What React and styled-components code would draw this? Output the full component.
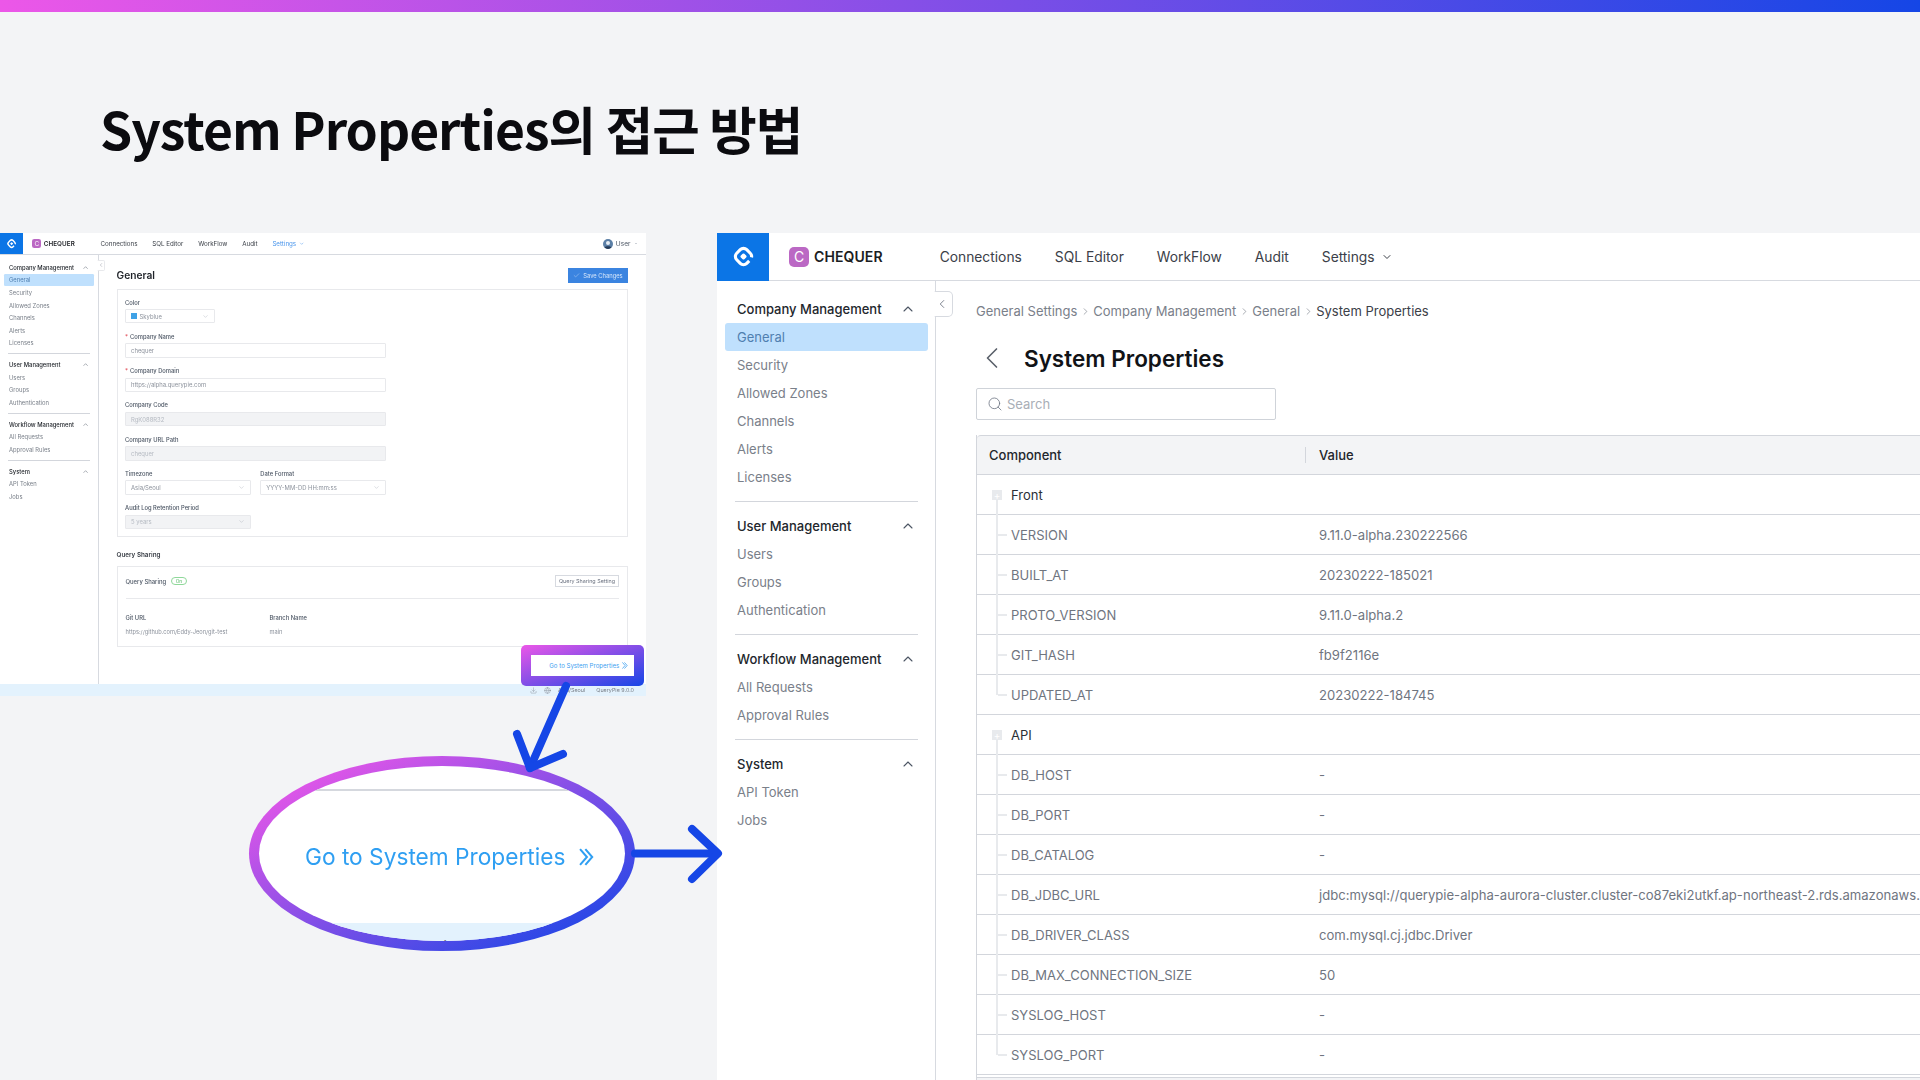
import React from "react"
import styled, { createGlobalStyle } from "styled-components"
import {
  Check,
  ChevronDown,
  ChevronLeft,
  ChevronRight,
  ChevronUp,
  Download,
  Globe,
  Search,
} from "lucide-react"

const UI_FONT = `Inter, "Noto Sans", sans-serif`

// the left window is the same app as the right one, at 45%
const SMALL = 0.45
const px = n => ({ $k = 1 }) => `${n * $k}px`

const menu = [
  {
    title: "Company Management",
    items: ["General", "Security", "Allowed Zones", "Channels", "Alerts", "Licenses"],
  },
  { title: "User Management", items: ["Users", "Groups", "Authentication"] },
  { title: "Workflow Management", items: ["All Requests", "Approval Rules"] },
  { title: "System", items: ["API Token", "Jobs"] },
]

const navItems = ["Connections", "SQL Editor", "WorkFlow", "Audit"]

const properties = [
  {
    name: "Front",
    rows: [
      ["VERSION", "9.11.0-alpha.230222566"],
      ["BUILT_AT", "20230222-185021"],
      ["PROTO_VERSION", "9.11.0-alpha.2"],
      ["GIT_HASH", "fb9f2116e"],
      ["UPDATED_AT", "20230222-184745"],
    ],
  },
  {
    name: "API",
    rows: [
      ["DB_HOST", "-"],
      ["DB_PORT", "-"],
      ["DB_CATALOG", "-"],
      ["DB_JDBC_URL", "jdbc:mysql://querypie-alpha-aurora-cluster.cluster-co87eki2utkf.ap-northeast-2.rds.amazonaws.com:3306"],
      ["DB_DRIVER_CLASS", "com.mysql.cj.jdbc.Driver"],
      ["DB_MAX_CONNECTION_SIZE", "50"],
      ["SYSLOG_HOST", "-"],
      ["SYSLOG_PORT", "-"],
    ],
  },
]

function LogoMark({ size }) {
  return (
    <svg width={size} height={size} viewBox="0 0 24 24" fill="none">
      <rect
        x="5.2"
        y="5.2"
        width="13.6"
        height="13.6"
        rx="4.4"
        transform="rotate(45 12 12)"
        stroke="#fff"
        strokeWidth="3"
        strokeDasharray="9 4 33.8 0"
      />
      <rect x="9.6" y="9.6" width="4.8" height="4.8" rx="1.2" transform="rotate(45 12 12)" fill="#fff" />
    </svg>
  )
}

function DoubleChevron({ height }) {
  return (
    <svg width={(height * 14) / 17} height={height} viewBox="0 0 14 17" fill="none" stroke="currentColor" strokeWidth="1.9">
      <path d="M1 1L7.5 8.5L1 16" />
      <path d="M6 1L12.5 8.5L6 16" />
    </svg>
  )
}

function TopNav({ k = 1, activeSettings, user }) {
  return (
    <Header $k={k}>
      <LogoCell $k={k}>
        <LogoMark size={25 * k} />
      </LogoCell>
      <Badge $k={k}>C</Badge>
      <Brand $k={k}>CHEQUER</Brand>
      <Nav $k={k}>
        {navItems.map(item => (
          <NavItem key={item} $k={k}>
            {item}
          </NavItem>
        ))}
        <NavItem $k={k} $active={activeSettings}>
          Settings
          <ChevronDown size={12 * k} strokeWidth={2} />
        </NavItem>
      </Nav>
      {user && (
        <UserBox>
          <svg width="10" height="10" viewBox="0 0 10 10">
            <circle cx="5" cy="5" r="5" fill="#5b7fa6" />
            <circle cx="5" cy="4" r="2" fill="#e6edf4" />
            <path d="M1.6 8.6C2.2 6.8 7.8 6.8 8.4 8.6 7 10.4 3 10.4 1.6 8.6Z" fill="#243a57" />
          </svg>
          User
          <Caret />
        </UserBox>
      )}
    </Header>
  )
}

function SideMenu({ k = 1 }) {
  return (
    <Sidebar $k={k}>
      {menu.map((group, i) => (
        <React.Fragment key={group.title}>
          {i > 0 && <SideRule $k={k} />}
          <SideTitle $k={k}>
            {group.title}
            <ChevronUp size={16 * k} strokeWidth={1.6} />
          </SideTitle>
          {group.items.map(item => (
            <SideItem key={item} $k={k} $active={item === "General"}>
              {item}
            </SideItem>
          ))}
        </React.Fragment>
      ))}
    </Sidebar>
  )
}

function Field({ label, value, required, select, disabled, width = 261 }) {
  return (
    <FieldBox $width={width}>
      <FieldLabel>
        {required && <Req>*</Req>}
        {label}
      </FieldLabel>
      <FieldInput $disabled={disabled}>
        {value}
        {select && <ChevronDown size={7} strokeWidth={1.2} />}
      </FieldInput>
    </FieldBox>
  )
}

function GeneralWindow() {
  return (
    <SmallWindow>
      <Shrunk>
        <TopNav k={SMALL} activeSettings user />
        <WindowBody>
          <SideMenu k={SMALL} />
          <SmallCollapse>
            <ChevronLeft size={6} strokeWidth={1.4} />
          </SmallCollapse>
          <SmallMain>
            <SmallHead>
              <SmallTitle>General</SmallTitle>
              <SaveButton>
                <Check size={7} strokeWidth={1.4} />
                Save Changes
              </SaveButton>
            </SmallHead>
            <FormCard>
              <FieldBox $width={90}>
                <FieldLabel>Color</FieldLabel>
                <FieldInput>
                  <ColorValue>
                    <Swatch />
                    Skyblue
                  </ColorValue>
                  <ChevronDown size={7} strokeWidth={1.2} />
                </FieldInput>
              </FieldBox>
              <Field required label="Company Name" value="chequer" />
              <Field required label="Company Domain" value="https://alpha.querypie.com" />
              <Field disabled label="Company Code" value="RgK088R32" />
              <Field disabled label="Company URL Path" value="chequer" />
              <FieldPair>
                <Field select width={125.7} label="Timezone" value="Asia/Seoul" />
                <Field select width={125.7} label="Date Format" value="YYYY-MM-DD HH:mm:ss" />
              </FieldPair>
              <Field select disabled width={125.7} label="Audit Log Retention Period" value="5 years" />
            </FormCard>
            <SectionTitle>Query Sharing</SectionTitle>
            <ShareCard>
              <ShareTop>
                <ShareLabel>
                  Query Sharing
                  <OnPill>On</OnPill>
                </ShareLabel>
                <ShareButton>Query Sharing Setting</ShareButton>
              </ShareTop>
              <ShareInfo>
                <div>
                  <InfoName>Git URL</InfoName>
                  <InfoValue>https://github.com/Eddy-Jeon/git-test</InfoValue>
                </div>
                <div>
                  <InfoName>Branch Name</InfoName>
                  <InfoValue>main</InfoValue>
                </div>
              </ShareInfo>
            </ShareCard>
          </SmallMain>
        </WindowBody>
        <StatusBar>
          <Download size={7} strokeWidth={1.3} />
          <Globe size={7} strokeWidth={1.3} />
          <span>Asia/Seoul</span>
          <StatusVersion>QueryPie 9.0.0</StatusVersion>
        </StatusBar>
      </Shrunk>
      <Highlight>
        <HighlightInner>
          Go to System Properties
          <DoubleChevron height={7} />
        </HighlightInner>
      </Highlight>
    </SmallWindow>
  )
}

function TreeRow({ row, last }) {
  return (
    <Row>
      <NameCell>
        <Guide $last={last} />
        <LeafName>{row[0]}</LeafName>
      </NameCell>
      <ValueCell>{row[1]}</ValueCell>
    </Row>
  )
}

function PropertiesWindow() {
  return (
    <BigWindow>
      <TopNav />
      <WindowBody>
        <SideMenu />
        <Collapse>
          <ChevronLeft size={14} strokeWidth={1.5} />
        </Collapse>
        <Main>
          <Crumbs>
            <span>General Settings</span>
            <ChevronRight size={11} strokeWidth={1.4} />
            <span>Company Management</span>
            <ChevronRight size={11} strokeWidth={1.4} />
            <span>General</span>
            <ChevronRight size={11} strokeWidth={1.4} />
            <CrumbNow>System Properties</CrumbNow>
          </Crumbs>
          <TitleRow>
            <ChevronLeft size={36} strokeWidth={1.1} color="#5b616b" />
            <PageTitle>System Properties</PageTitle>
          </TitleRow>
          <SearchBox>
            <Search size={16} strokeWidth={1.2} color="#6b7280" />
            Search
          </SearchBox>
          <Table>
            <HeadRow>
              <HeadName>Component</HeadName>
              <HeadSep />
              <HeadValue>Value</HeadValue>
            </HeadRow>
            {properties.map(group => (
              <React.Fragment key={group.name}>
                <Row>
                  <NameCell>
                    <GroupGuide>
                      <PlusBox>+</PlusBox>
                    </GroupGuide>
                    <GroupName>{group.name}</GroupName>
                  </NameCell>
                </Row>
                {group.rows.map((row, i) => (
                  <TreeRow key={row[0]} row={row} last={i === group.rows.length - 1} />
                ))}
              </React.Fragment>
            ))}
            <TableFoot />
          </Table>
        </Main>
      </WindowBody>
    </BigWindow>
  )
}

export default function App() {
  return (
    <Slide>
      <GlobalStyle />
      <TopBar />
      <SlideTitle>System Properties의 접근 방법</SlideTitle>
      <GeneralWindow />
      <PropertiesWindow />
      <Lens>
        <LensInner>
          <LensRule />
          <LensLink>
            <span>Go to System Properties</span>
            <DoubleChevron height={18} />
          </LensLink>
          <LensStatus>
            <span>/Seoul</span>
            <span>Q</span>
          </LensStatus>
        </LensInner>
      </Lens>
      <Arrows viewBox="0 0 1920 1080">
        <g fill="none" stroke="#1546e6" strokeWidth="8" strokeLinecap="round" strokeLinejoin="round">
          <path d="M566 686L530 768" />
          <path d="M517 734L530 768L563 754" />
          <path d="M635 853.5H717" />
          <path d="M692 829L718 853.5L692 879" />
        </g>
      </Arrows>
    </Slide>
  )
}

const GlobalStyle = createGlobalStyle`
  body {
    margin: 0;
    background: #f3f4f6;
    font-family: ${UI_FONT};
  }
`

const Slide = styled.div`
  position: relative;
  width: 1920px;
  height: 1080px;
  overflow: hidden;
  background: #f3f4f6;
`

const TopBar = styled.div`
  height: 12px;
  background: linear-gradient(90deg, #ec57e8 0%, #1546e6 100%);
`

const SlideTitle = styled.h1`
  margin: 82px 0 0 100px;
  font-family: "Noto Sans CJK KR", "Noto Sans", sans-serif;
  font-size: 51.6px;
  line-height: 68px;
  font-weight: 700;
  letter-spacing: -1px;
  color: #0b0b0f;
`

const Header = styled.header`
  display: flex;
  align-items: center;
  flex: none;
  height: ${px(47)};
  border-bottom: 1px solid #d7dae0;
  background: #fff;
`

const LogoCell = styled.div`
  display: flex;
  align-items: center;
  justify-content: center;
  width: ${px(52)};
  height: ${px(48)};
  background: #0b75e6;
  flex: none;
`

const Badge = styled.span`
  display: flex;
  align-items: center;
  justify-content: center;
  width: ${px(20)};
  height: ${px(20)};
  margin-left: ${px(20)};
  border-radius: ${px(5)};
  background: #bb68c4;
  color: #fff;
  font-size: ${px(14)};
  font-weight: 400;
`

const Brand = styled.span`
  margin-left: ${px(5)};
  font-size: ${px(14)};
  font-weight: 600;
  color: #1b1d22;
  letter-spacing: 0.1px;
`

const Nav = styled.nav`
  display: flex;
  align-items: center;
  gap: ${px(33)};
  margin-left: ${px(57)};
`

const NavItem = styled.span`
  display: flex;
  align-items: center;
  gap: ${px(6)};
  font-size: ${px(13.8)};
  color: ${p => (p.$active ? "#4a96ec" : "#3b4048")};
`

const UserBox = styled.div`
  display: flex;
  align-items: center;
  gap: 2.5px;
  margin-left: auto;
  margin-right: 9px;
  font-size: 6.6px;
  color: #4b5563;
`

const Caret = styled.i`
  width: 0;
  height: 0;
  margin-left: 2px;
  border: 1.5px solid transparent;
  border-top-color: #9ca3af;
  border-bottom: 0;
`

const WindowBody = styled.div`
  position: relative;
  display: flex;
  flex: 1;
  min-height: 0;
`

// the 1px borders do not shrink with the window, so the small one takes it out of its spacing
const Sidebar = styled.aside`
  flex: none;
  box-sizing: border-box;
  width: ${px(219)};
  padding-top: ${p => (p.$k < 1 ? "5.9px" : "14px")};
  border-right: 1px solid #d7dae0;
  background: #fff;
`

const SideTitle = styled.div`
  display: flex;
  align-items: center;
  justify-content: space-between;
  height: ${px(28)};
  padding: 0 ${px(19)} 0 ${px(20)};
  font-size: ${px(13)};
  font-weight: 500;
  color: #22262c;
  svg {
    color: #4b5563;
  }
`

const SideItem = styled.div`
  display: flex;
  align-items: center;
  height: ${px(28)};
  margin: 0 ${px(7)} 0 ${px(8)};
  padding-left: ${px(12)};
  border-radius: ${px(3)};
  font-size: ${px(13)};
  color: ${p => (p.$active ? "#4f7fb0" : "#7a808a")};
  background: ${p => (p.$active ? "#bfe0fd" : "transparent")};
`

const SideRule = styled.div`
  height: 1px;
  margin: ${p => (p.$k < 1 ? "4.1px" : "10px")} ${px(17)} ${p => (p.$k < 1 ? "4.1px" : "10px")} ${px(18)};
  background: #d3d6dc;
`

const BigWindow = styled.section`
  position: absolute;
  left: 717px;
  top: 233px;
  display: flex;
  flex-direction: column;
  width: 1203px;
  height: 847px;
  overflow: hidden;
  background: #fff;
`

const Collapse = styled.div`
  position: absolute;
  left: 217px;
  top: 10px;
  display: flex;
  align-items: center;
  box-sizing: border-box;
  width: 19px;
  height: 26px;
  border: 1px solid #d7dae0;
  border-left: 1px solid #fff;
  border-radius: 0 5px 5px 0;
  background: #fff;
  color: #6b7280;
`

const Main = styled.main`
  flex: 1;
  min-width: 0;
  padding: 20px 0 0 40px;
`

const Crumbs = styled.div`
  display: flex;
  align-items: center;
  gap: 2.5px;
  height: 20px;
  font-size: 13px;
  color: #7a808a;
`

const CrumbNow = styled.span`
  color: #3b4048;
`

const TitleRow = styled.div`
  display: flex;
  align-items: center;
  gap: 14.5px;
  height: 36px;
  margin: 19px 0 0 -2.5px;
`

const PageTitle = styled.h2`
  margin: 0;
  font-size: 22.5px;
  font-weight: 600;
  color: #111317;
`

const SearchBox = styled.div`
  display: flex;
  align-items: center;
  gap: 4px;
  box-sizing: border-box;
  width: 300px;
  height: 32px;
  margin-top: 12px;
  padding-left: 10px;
  border: 1px solid #cfd3d9;
  border-radius: 2px;
  font-size: 13px;
  color: #a9aeb6;
`

const Table = styled.div`
  width: 1000px;
  margin-top: 15px;
  border-left: 1px solid #d3d6dc;
`

const HeadRow = styled.div`
  display: flex;
  align-items: center;
  height: 38px;
  border-top: 1px solid #d3d6dc;
  border-bottom: 1px solid #d3d6dc;
  border-top-left-radius: 4px;
  background: #f3f4f6;
  font-size: 13px;
  font-weight: 500;
  color: #22262c;
`

const HeadName = styled.div`
  width: 316px;
  padding-left: 12px;
`

const HeadSep = styled.i`
  width: 1px;
  height: 16px;
  background: #d3d6dc;
`

const HeadValue = styled.div`
  padding-left: 13px;
`

const Row = styled.div`
  display: flex;
  align-items: center;
  box-sizing: border-box;
  height: 40px;
  border-bottom: 1px solid #d3d6dc;
  font-size: 13px;
`

const NameCell = styled.div`
  display: flex;
  align-items: center;
  flex: none;
  width: 329px;
  height: 100%;
`

const GroupGuide = styled.div`
  position: relative;
  display: flex;
  align-items: center;
  flex: none;
  box-sizing: border-box;
  width: 34px;
  height: 100%;
  padding-left: 15px;
  &::after {
    content: "";
    position: absolute;
    left: 19px;
    top: 25px;
    bottom: -1px;
    width: 2px;
    background: #e8eaed;
  }
`

const PlusBox = styled.span`
  display: flex;
  align-items: center;
  justify-content: center;
  width: 10px;
  height: 10px;
  background: #e8eaed;
  color: #fff;
  font-size: 10px;
  line-height: 10px;
`

const Guide = styled.div`
  position: relative;
  flex: none;
  width: 34px;
  height: 100%;
  &::before {
    content: "";
    position: absolute;
    left: 19px;
    top: 0;
    bottom: ${p => (p.$last ? "50%" : "-1px")};
    width: 2px;
    background: #e8eaed;
  }
  &::after {
    content: "";
    position: absolute;
    left: 21px;
    top: calc(50% - 1px);
    width: 9px;
    height: 2px;
    background: #e8eaed;
  }
`

const GroupName = styled.span`
  color: #2b2f36;
`

const LeafName = styled.span`
  color: #6f757f;
`

const ValueCell = styled.div`
  padding-left: 13px;
  font-size: 13.1px;
  white-space: nowrap;
  color: #6f757f;
`

const TableFoot = styled.div`
  height: 6px;
  margin-top: 2px;
  border-top: 1px solid #d3d6dc;
  background: #f3f4f6;
`

const SmallWindow = styled.section`
  position: absolute;
  left: 0;
  top: 233px;
  width: 646px;
  height: 463px;
`

const Shrunk = styled.div`
  display: flex;
  flex-direction: column;
  height: 100%;
  background: #fff;
  filter: blur(0.3px);
`

const SmallCollapse = styled.div`
  position: absolute;
  left: 97px;
  top: 4.5px;
  display: flex;
  align-items: center;
  box-sizing: border-box;
  width: 8px;
  height: 11px;
  border: 1px solid #e8e9ec;
  border-left-color: #fff;
  border-radius: 0 2px 2px 0;
  background: #fff;
  color: #6b7280;
`

const SmallMain = styled.div`
  flex: 1;
  min-width: 0;
  padding: 13px 18px 0 18px;
`

const SmallHead = styled.div`
  display: flex;
  align-items: center;
  justify-content: space-between;
  height: 14.5px;
`

const SmallTitle = styled.h3`
  margin: 0;
  font-size: 10.2px;
  font-weight: 600;
  color: #1f2329;
`

const SaveButton = styled.span`
  display: flex;
  align-items: center;
  justify-content: center;
  gap: 3px;
  width: 60px;
  height: 14.5px;
  background: #3b84e0;
  color: #d6e6fa;
  font-size: 5.8px;
`

const FormCard = styled.div`
  box-sizing: border-box;
  height: 248px;
  margin-top: 6.5px;
  padding: 8.5px 7.5px;
  border: 1px solid #e8e9ec;
`

const FieldBox = styled.div`
  width: ${p => p.$width}px;
  margin-bottom: 9.5px;
`

const FieldPair = styled.div`
  display: flex;
  gap: 9.6px;
`

const FieldLabel = styled.div`
  height: 8px;
  margin-bottom: 2.4px;
  font-size: 5.8px;
  line-height: 8px;
  font-weight: 500;
  color: #4b5563;
  white-space: nowrap;
`

const Req = styled.span`
  margin-right: 2px;
  color: #e0444f;
`

const FieldInput = styled.div`
  display: flex;
  align-items: center;
  justify-content: space-between;
  box-sizing: border-box;
  height: 14.4px;
  padding: 0 5px;
  border: 1px solid #e8e9ec;
  border-radius: 1px;
  background: ${p => (p.$disabled ? "#f2f3f5" : "#fff")};
  color: ${p => (p.$disabled ? "#b5bac2" : "#8b919b")};
  font-size: 5.9px;
  white-space: nowrap;
  overflow: hidden;
  svg {
    flex: none;
    color: #9ca3af;
  }
`

const ColorValue = styled.span`
  display: flex;
  align-items: center;
  gap: 3px;
`

const Swatch = styled.i`
  width: 5.5px;
  height: 5.5px;
  background: #3fa2e6;
`

const SectionTitle = styled.div`
  margin-top: 12.5px;
  height: 10px;
  font-size: 6.3px;
  line-height: 10px;
  font-weight: 600;
  color: #3b4048;
`

const ShareCard = styled.div`
  box-sizing: border-box;
  height: 80.5px;
  margin-top: 6.5px;
  padding: 8px 8px 0;
  border: 1px solid #e8e9ec;
`

const ShareTop = styled.div`
  display: flex;
  align-items: center;
  justify-content: space-between;
  height: 12px;
  padding-bottom: 11px;
  border-bottom: 1px solid #e8e9ec;
`

const ShareLabel = styled.div`
  display: flex;
  align-items: center;
  gap: 5px;
  font-size: 5.9px;
  font-weight: 500;
  color: #4b5563;
`

const OnPill = styled.span`
  padding: 0 3.5px;
  border: 1px solid #8fd89a;
  border-radius: 4px;
  color: #6cc47a;
  font-size: 4.8px;
  line-height: 6px;
`

const ShareButton = styled.span`
  padding: 2px 3px;
  border: 1px solid #d7dae0;
  font-size: 5.4px;
  line-height: 6px;
  color: #6b7280;
`

const ShareInfo = styled.div`
  display: grid;
  grid-template-columns: 144px 1fr;
  padding-top: 15px;
`

const InfoName = styled.div`
  font-size: 5.8px;
  line-height: 8px;
  font-weight: 500;
  color: #4b5563;
`

const InfoValue = styled.div`
  margin-top: 6px;
  font-size: 5.7px;
  line-height: 8px;
  color: #8b919b;
`

const StatusBar = styled.footer`
  display: flex;
  align-items: center;
  justify-content: flex-end;
  gap: 7px;
  flex: none;
  height: 12px;
  padding-right: 12px;
  background: #e3f2fd;
  font-size: 5.4px;
  color: #7a808a;
`

const StatusVersion = styled.span`
  margin-left: 4px;
`

const Highlight = styled.div`
  position: absolute;
  left: 521px;
  top: 412px;
  display: flex;
  align-items: center;
  justify-content: center;
  width: 123px;
  height: 41px;
  border-radius: 5px;
  background: linear-gradient(to bottom right, #ec57e8 0%, #1546e6 100%);
`

const HighlightInner = styled.div`
  display: flex;
  align-items: center;
  justify-content: flex-end;
  gap: 3px;
  box-sizing: border-box;
  width: 103px;
  height: 21px;
  padding-right: 6px;
  background: #fff;
  color: #3ea0f0;
  font-size: 6.1px;
  white-space: nowrap;
`

const Lens = styled.div`
  position: absolute;
  left: 249px;
  top: 756px;
  box-sizing: border-box;
  width: 386px;
  height: 195px;
  padding: 10px;
  border-radius: 50%;
  background: linear-gradient(to bottom right, #ec57e8 8%, #1546e6 95%);
`

const LensInner = styled.div`
  display: flex;
  flex-direction: column;
  height: 100%;
  overflow: hidden;
  border-radius: 50%;
  background: #fff;
`

const LensRule = styled.div`
  flex: none;
  height: 1.5px;
  margin-top: 23px;
  background: #d5d8de;
`

const LensLink = styled.div`
  display: flex;
  align-items: center;
  gap: 14px;
  flex: 1;
  padding-left: 46px;
  font-size: 22.7px;
  color: #2f9ff2;
  white-space: nowrap;
  filter: blur(0.3px);
`

const LensStatus = styled.div`
  display: flex;
  gap: 40px;
  flex: none;
  height: 18px;
  padding: 14px 0 0 134px;
  box-sizing: border-box;
  background: #e3f2fd;
  font-size: 18px;
  color: #6b7280;
`

const Arrows = styled.svg`
  position: absolute;
  left: 0;
  top: 0;
  width: 1920px;
  height: 1080px;
  pointer-events: none;
`
